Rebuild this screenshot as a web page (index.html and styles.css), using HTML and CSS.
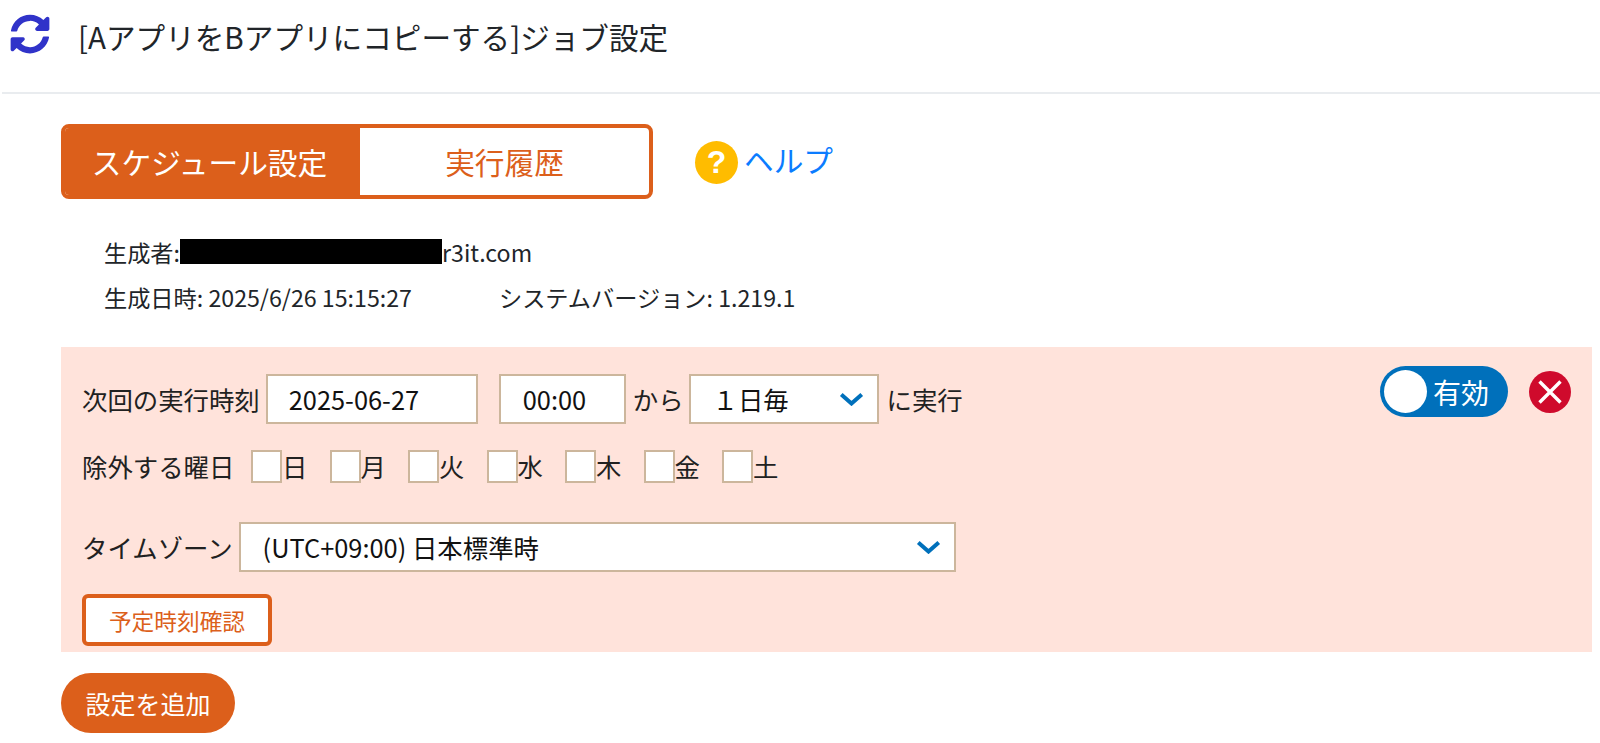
FILE: index.html
```html
<!DOCTYPE html>
<html lang="ja">
<head>
  <meta charset="UTF-8" />
  <title>ジョブ設定</title>
  <link rel="stylesheet" href="styles.css">
</head>
<body>
  <header class="page-header">
    <svg class="sync-icon" viewBox="0 0 512 512" aria-hidden="true">
      <path d="M370.72 133.28C339.458 104.008 298.888 87.962 255.848 88c-77.458.068-144.328 53.178-162.791 126.85-1.344 5.363-6.122 9.15-11.651 9.15H24.103c-7.498 0-13.194-6.807-11.807-14.176C33.933 94.924 134.813 8 256 8c66.448 0 126.791 26.136 171.315 68.685L463.03 40.97C478.149 25.851 504 36.559 504 57.941V192c0 13.255-10.745 24-24 24H345.941c-21.382 0-32.09-25.851-16.971-40.971l41.75-41.749zM32 296h134.059c21.382 0 32.09 25.851 16.971 40.971l-41.75 41.75c31.262 29.273 71.835 45.319 114.876 45.28 77.418-.07 144.315-53.144 162.787-126.849 1.344-5.363 6.122-9.15 11.651-9.15h57.304c7.498 0 13.194 6.807 11.807 14.176C478.067 417.076 377.187 504 256 504c-66.448 0-126.791-26.136-171.315-68.685L48.97 471.03C33.851 486.149 8 475.441 8 454.059V320c0-13.255 10.745-24 24-24z"/>
    </svg>
    <h1 class="page-title">[AアプリをBアプリにコピーする]ジョブ設定</h1>
  </header>

  <main class="content">
    <div class="tab-row">
      <div class="tabs">
        <div class="tab active">スケジュール設定</div>
        <div class="tab">実行履歴</div>
      </div>
      <a class="help-link" href="#">
        <span class="help-mark">?</span>
        <span class="help-text">ヘルプ</span>
      </a>
    </div>

    <div class="meta">
      <p class="meta-line">生成者:<span class="redacted"></span>r3it.com</p>
      <p class="meta-line">
        <span class="created">生成日時: 2025/6/26 15:15:27</span>
        <span>システムバージョン: 1.219.1</span>
      </p>
    </div>

    <section class="schedule">
      <div class="schedule-tools">
        <div class="toggle"><span class="knob"></span>有効</div>
        <svg class="remove" viewBox="0 0 42 42" aria-hidden="true">
          <circle cx="21" cy="21" r="21" fill="#cf0a2c"/>
          <path d="M10.5 10.5l21 21M31.5 10.5l-21 21" stroke="#fff" stroke-width="3.4"/>
        </svg>
      </div>

      <div class="form-row first">
        <span>次回の実行時刻</span>
        <div class="field date">2025-06-27</div>
        <div class="field time">00:00</div>
        <span>から</span>
        <div class="field select every">
          １日毎
          <svg class="chevron" viewBox="0 0 22 12" aria-hidden="true"><path d="M2 2l9 8 9-8" /></svg>
        </div>
        <span>に実行</span>
      </div>

      <div class="form-row days">
        <span class="days-label">除外する曜日</span>
        <label class="day"><span class="box"></span>日</label>
        <label class="day"><span class="box"></span>月</label>
        <label class="day"><span class="box"></span>火</label>
        <label class="day"><span class="box"></span>水</label>
        <label class="day"><span class="box"></span>木</label>
        <label class="day"><span class="box"></span>金</label>
        <label class="day"><span class="box"></span>土</label>
      </div>

      <div class="form-row zone">
        <span>タイムゾーン</span>
        <div class="field select tz">
          (UTC+09:00) 日本標準時
          <svg class="chevron" viewBox="0 0 22 12" aria-hidden="true"><path d="M2 2l9 8 9-8" /></svg>
        </div>
      </div>

      <button class="check-btn" type="button">予定時刻確認</button>
    </section>

    <button class="add-btn" type="button">設定を追加</button>
  </main>
</body>
</html>
```

FILE: styles.css
```css
* {
  box-sizing: border-box;
  margin: 0;
  padding: 0;
  font-family: "Noto Sans CJK JP", "Noto Sans", sans-serif;
}

html, body {
  height: 743px;
  overflow: hidden;
}

body {
  background: #ffffff;
  color: #212529;
}

.page-header {
  display: flex;
  align-items: center;
  height: 94px;
  margin-left: 2px;
  padding: 0 0 18px 8px;
  border-bottom: 2px solid #e9ecef;
}

.sync-icon {
  width: 40px;
  height: 40px;
  margin-bottom: 6px;
  fill: #3033c9;
  flex: none;
}

.page-title {
  margin-left: 28px;
  font-size: 29.6px;
  font-weight: 400;
  line-height: 40px;
}

.content {
  padding: 30px 8px 0 61px;
}

.tab-row {
  display: flex;
  align-items: center;
}

.tabs {
  display: flex;
  width: 592px;
  height: 75px;
  border: 4px solid #dc5f1b;
  border-radius: 8px;
  overflow: hidden;
}

.tab {
  flex: 1;
  display: flex;
  align-items: center;
  justify-content: center;
  color: #dc5f1b;
  font-size: 29.7px;
}

.tab.active {
  flex: none;
  width: 295px;
  padding-right: 6px;
  background: #dc5f1b;
  color: #ffffff;
}

.help-link {
  display: flex;
  align-items: center;
  margin-left: 42px;
  color: #0b7cff;
  font-size: 29.7px;
  text-decoration: none;
}

.help-mark {
  display: flex;
  align-items: center;
  justify-content: center;
  width: 43px;
  height: 43px;
  margin: 2px 6px 0 0;
  border-radius: 50%;
  background: #ffbc00;
  color: #ffffff;
  font-family: "Liberation Sans", sans-serif;
  font-size: 32px;
  font-weight: 700;
}

.help-text {
  margin-bottom: 5px;
}

.meta {
  padding: 30px 0 0 43px;
  font-size: 23.2px;
}

.meta-line {
  display: flex;
  align-items: center;
  height: 45px;
}

.redacted {
  width: 262px;
  height: 25px;
  background: #000000;
}

.created {
  width: 395px;
}

.schedule {
  position: relative;
  height: 305px;
  margin-top: 28px;
  padding: 27px 0 0 21px;
  background: #ffe3db;
  color: #212121;
  font-size: 25.4px;
}

.schedule-tools {
  position: absolute;
  top: 19px;
  right: 21px;
  display: flex;
  align-items: center;
  gap: 21px;
}

.toggle {
  display: flex;
  align-items: center;
  width: 128px;
  height: 51px;
  padding-left: 4px;
  border-radius: 26px;
  background: #0070bb;
  color: #ffffff;
  font-size: 28px;
}

.knob {
  width: 43px;
  height: 43px;
  margin-right: 6px;
  border-radius: 50%;
  background: #ffffff;
}

.remove {
  width: 42px;
  height: 42px;
}

.form-row {
  display: flex;
  align-items: center;
}

.field {
  display: flex;
  align-items: center;
  justify-content: space-between;
  height: 50px;
  background: #ffffff;
  border: 2px solid #ccb69c;
  color: #111111;
}

.date {
  width: 212px;
  margin-left: 6px;
  padding-left: 21px;
}

.time {
  width: 127px;
  margin: 0 7px 0 21px;
  padding-left: 22px;
}

.every {
  width: 190px;
  margin: 0 8px 0 5px;
  padding: 0 13px 0 22px;
}

.chevron {
  width: 25px;
  height: 14px;
  fill: none;
  stroke: #0070bb;
  stroke-width: 3.5;
}

.days {
  margin-top: 24px;
}

.days-label {
  width: 169px;
}

.day {
  display: flex;
  align-items: center;
  width: 78.5px;
}

.box {
  width: 31px;
  height: 33px;
  background: #ffffff;
  border: 2px solid #ccb69c;
}

.zone {
  margin-top: 38px;
}

.tz {
  width: 717px;
  margin-left: 6px;
  padding: 0 13px 0 22px;
}

.check-btn {
  display: block;
  width: 190px;
  height: 52px;
  margin-top: 22px;
  background: #ffffff;
  border: 4px solid #dc5f1b;
  border-radius: 6px;
  color: #dc5f1b;
  font-size: 22.7px;
}

.add-btn {
  display: block;
  width: 174px;
  height: 60px;
  margin-top: 21px;
  background: #dc5f1b;
  border: none;
  border-radius: 30px;
  color: #ffffff;
  font-size: 25px;
}
```
